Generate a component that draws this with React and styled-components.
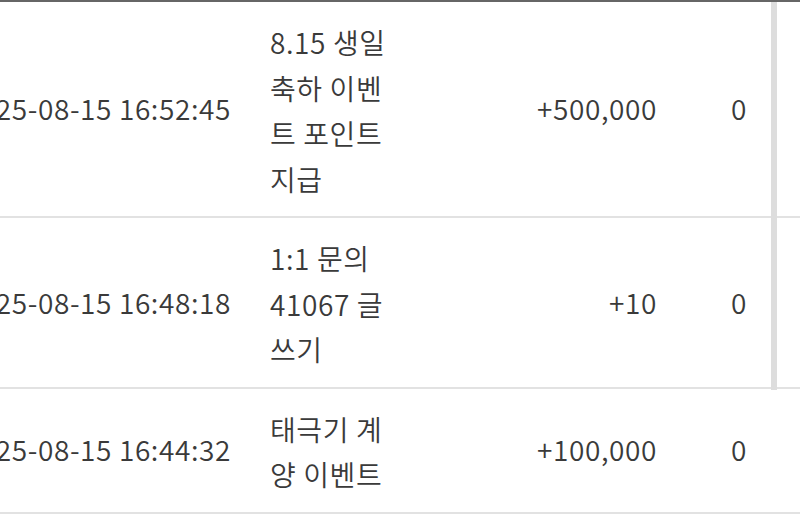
import React from "react";
import styled, { createGlobalStyle } from "styled-components";

const rows = [
  {
    date: "2025-08-15 16:52:45",
    desc: "8.15 생일 축하 이벤트 포인트 지급",
    amount: "+500,000",
    balance: "0",
  },
  {
    date: "2025-08-15 16:48:18",
    desc: "1:1 문의 41067 글쓰기",
    amount: "+10",
    balance: "0",
  },
  {
    date: "2025-08-15 16:44:32",
    desc: "태극기 계양 이벤트",
    amount: "+100,000",
    balance: "0",
  },
];

const App = () => {
  return (
    <>
      <GlobalStyle />
      <Viewport>
        <Table>
          {rows.map((row) => (
            <Row key={row.date}>
              <DateCell>{row.date}</DateCell>
              <DescCell>{row.desc}</DescCell>
              <NumCell>{row.amount}</NumCell>
              <NumCell $right={19}>{row.balance}</NumCell>
              <Cell />
            </Row>
          ))}
        </Table>
        <ScrollThumb />
      </Viewport>
    </>
  );
};

const GlobalStyle = createGlobalStyle`
  html, body {
    margin: 0;
    padding: 0;
    background: #fff;
  }
  body {
    font-family: "Noto Sans CJK KR", "Noto Sans", sans-serif;
    color: #3a3a3a;
  }
`;

const Viewport = styled.div`
  position: relative;
  width: 800px;
  height: 527px;
  overflow: hidden;
  border-top: 2px solid #666;
  box-sizing: border-box;
`;

const Table = styled.div`
  display: grid;
  grid-template-columns: 330px 165px 262px 89px 80px;
  margin-left: -80px;
  width: max-content;
`;

const Row = styled.div`
  display: contents;
`;

const Cell = styled.div`
  display: flex;
  align-items: center;
  box-sizing: border-box;
  padding: 16px 20px;
  font-size: 28px;
  font-weight: 350;
  line-height: 45.5px;
  letter-spacing: 0.6px;
  border-bottom: 2px solid #e2e2e2;
`;

const DateCell = styled(Cell)`
  justify-content: flex-end;
  padding-right: 19px;
  white-space: nowrap;
`;

const DescCell = styled(Cell)`
  display: block;
  padding-top: 18px;
  padding-bottom: 14px;
`;

const NumCell = styled(Cell)`
  justify-content: flex-end;
  padding-right: ${(p) => (p.$right ? `${p.$right}px` : "20px")};
`;

const ScrollThumb = styled.div`
  position: absolute;
  left: 771px;
  top: 0;
  width: 6px;
  height: 388px;
  background: #dddddd;
`;

export default App;
